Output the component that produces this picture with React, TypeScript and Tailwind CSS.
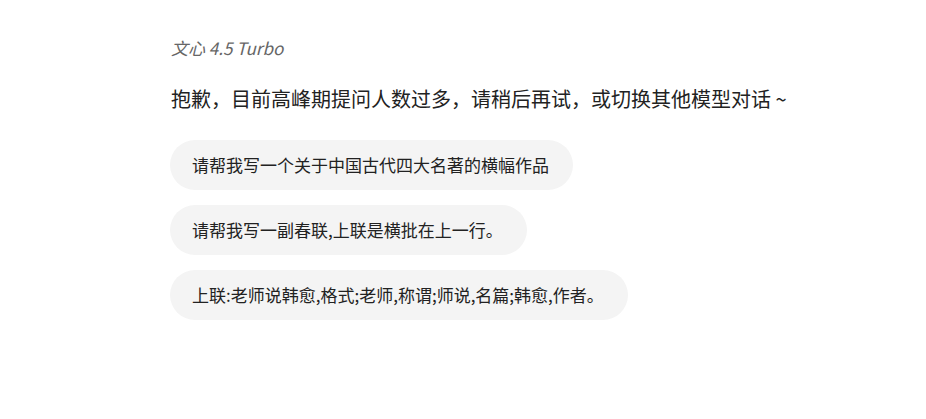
export default function App() {
  const chips = [
    "请帮我写一个关于中国古代四大名著的横幅作品",
    "请帮我写一副春联,上联是横批在上一行。",
    "上联:老师说韩愈,格式;老师,称谓;师说,名篇;韩愈,作者。",
  ];
  return (
    <div className="w-[926px] h-[419px] bg-white" style={{ fontFamily: '"Noto Sans CJK SC", "Noto Sans", sans-serif' }}>
      <div className="pl-[171px] pt-[37px] flex flex-col items-start">
        <div className="text-[17px] leading-[22px] italic text-[#666]">文心 4.5 Turbo</div>
        <div className="mt-[25px] text-[20px] leading-[30px] text-[#222]">抱歉，目前高峰期提问人数过多，请稍后再试，或切换其他模型对话 ~</div>
        <div className="mt-[26px] flex flex-col items-start gap-[15px]">
          {chips.map((c) => (
            <div key={c} className="h-[50px] pl-[22px] pr-[24px] flex items-center rounded-full bg-[#f4f4f4] text-[17px] text-[#222] -ml-[1px]">
              {c}
            </div>
          ))}
        </div>
      </div>
    </div>
  );
}
